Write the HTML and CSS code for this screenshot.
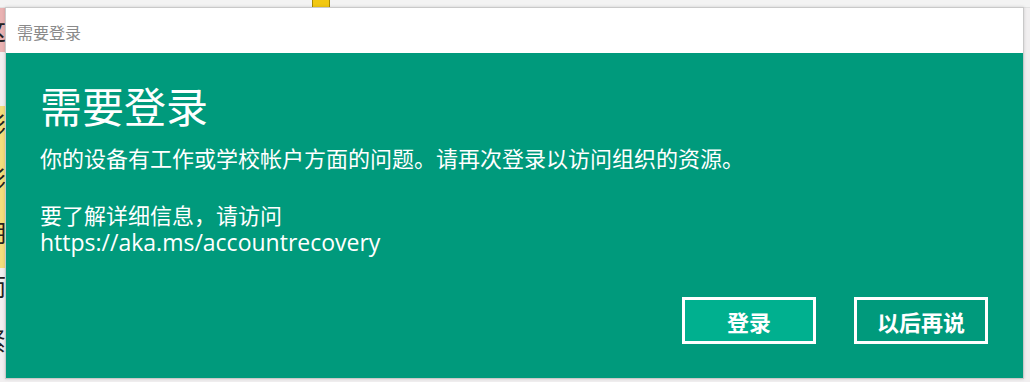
FILE: index.html
```html
<!DOCTYPE html>
<html lang="zh-CN">
<head>
    <meta charset="UTF-8">
    <title>需要登录</title>
    <link rel="stylesheet" href="styles.css">
</head>
<body>

<div class="desk">
    <div class="desk-bar">
        <span class="desk-icon"></span>
    </div>
    <div class="desk-doc">
        <div class="doc-line pink">这</div>
        <div class="doc-line"></div>
        <div class="doc-line mark">影</div>
        <div class="doc-line mark">影</div>
        <div class="doc-line mark">期</div>
        <div class="doc-line">而</div>
        <div class="doc-line">紧</div>
    </div>

    <!-- 登录提示窗口 -->
    <div class="dialog">
        <div class="dialog-title">需要登录</div>
        <div class="dialog-body">
            <h1>需要登录</h1>
            <p class="msg">你的设备有工作或学校帐户方面的问题。请再次登录以访问组织的资源。</p>
            <div class="info">
                <p>要了解详细信息，请访问</p>
                <p class="url">https://aka.ms/accountrecovery</p>
            </div>
            <div class="actions">
                <button class="btn primary">登录</button>
                <button class="btn">以后再说</button>
            </div>
        </div>
    </div>
</div>

</body>
</html>
```

FILE: styles.css
```css
body {
    margin: 0;
    background-color: #f1eff0;
    font-family: "Open Sans", "Noto Sans CJK SC", sans-serif;
}

.desk {
    position: relative;
    width: 1030px;
    height: 382px;
    overflow: hidden;
}

.desk-bar {
    height: 7px;
    background-color: #f3f3f3;
    border-bottom: 1px solid #e2e2e2;
}

.desk-icon {
    display: block;
    margin-left: 312px;
    width: 16px;
    height: 10px;
    background-color: #f2c811;
    border: 1px solid #a88a00;
    border-top: none;
    border-radius: 0 0 3px 3px;
}

.desk-doc {
    margin-left: -18px;
    padding-top: 12px;
    font-family: "Noto Sans CJK SC", sans-serif;
    font-size: 24px;
    color: #222;
}

.doc-line {
    height: 54px;
}

.doc-line.pink {
    background-color: #e9b2b2;
    width: 24px;
    margin-top: -12px;
    height: 44px;
    line-height: 44px;
}

.doc-line.mark {
    background-color: #f3dd7c;
    width: 24px;
}

/* 对话框 */

.dialog {
    position: absolute;
    left: 5px;
    top: 7px;
    width: 1017px;
    height: 370px;
    border: 1px solid #c9c9c9;
    display: flex;
    flex-direction: column;
    box-shadow: 0 0 3px rgba(0,0,0,0.15);
}

.dialog-title {
    height: 45px;
    line-height: 48px;
    background-color: #fff;
    color: #8a8a8a;
    font-family: "Noto Sans CJK SC", sans-serif;
    font-size: 16px;
    padding-left: 11px;
}

.dialog-body {
    flex: 1;
    background-color: #009a7c;
    color: #fff;
    padding: 25px 35px 34px 34px;
    display: flex;
    flex-direction: column;
}

.dialog-body h1 {
    margin: 0;
    font-family: "Noto Sans CJK SC", sans-serif;
    font-size: 42px;
    font-weight: normal;
    line-height: 54px;
}

.dialog-body p {
    margin: 0;
    font-size: 22px;
    line-height: 27px;
}

.dialog-body .msg {
    margin-top: 13px;
}

.dialog-body .info {
    margin-top: 30px;
}

.dialog-body .url {
    font-size: 23px;
    line-height: 29px;
    margin-top: -1px;
}

.actions {
    margin-top: auto;
    display: flex;
    justify-content: flex-end;
    gap: 38px;
}

.btn {
    width: 134px;
    height: 47px;
    border: 3px solid #fff;
    background-color: #009a7c;
    color: #fff;
    font-family: "Noto Sans CJK SC", sans-serif;
    font-size: 22px;
    font-weight: bold;
    cursor: pointer;
}

.btn.primary {
    background-color: #00b08f;
}
```
